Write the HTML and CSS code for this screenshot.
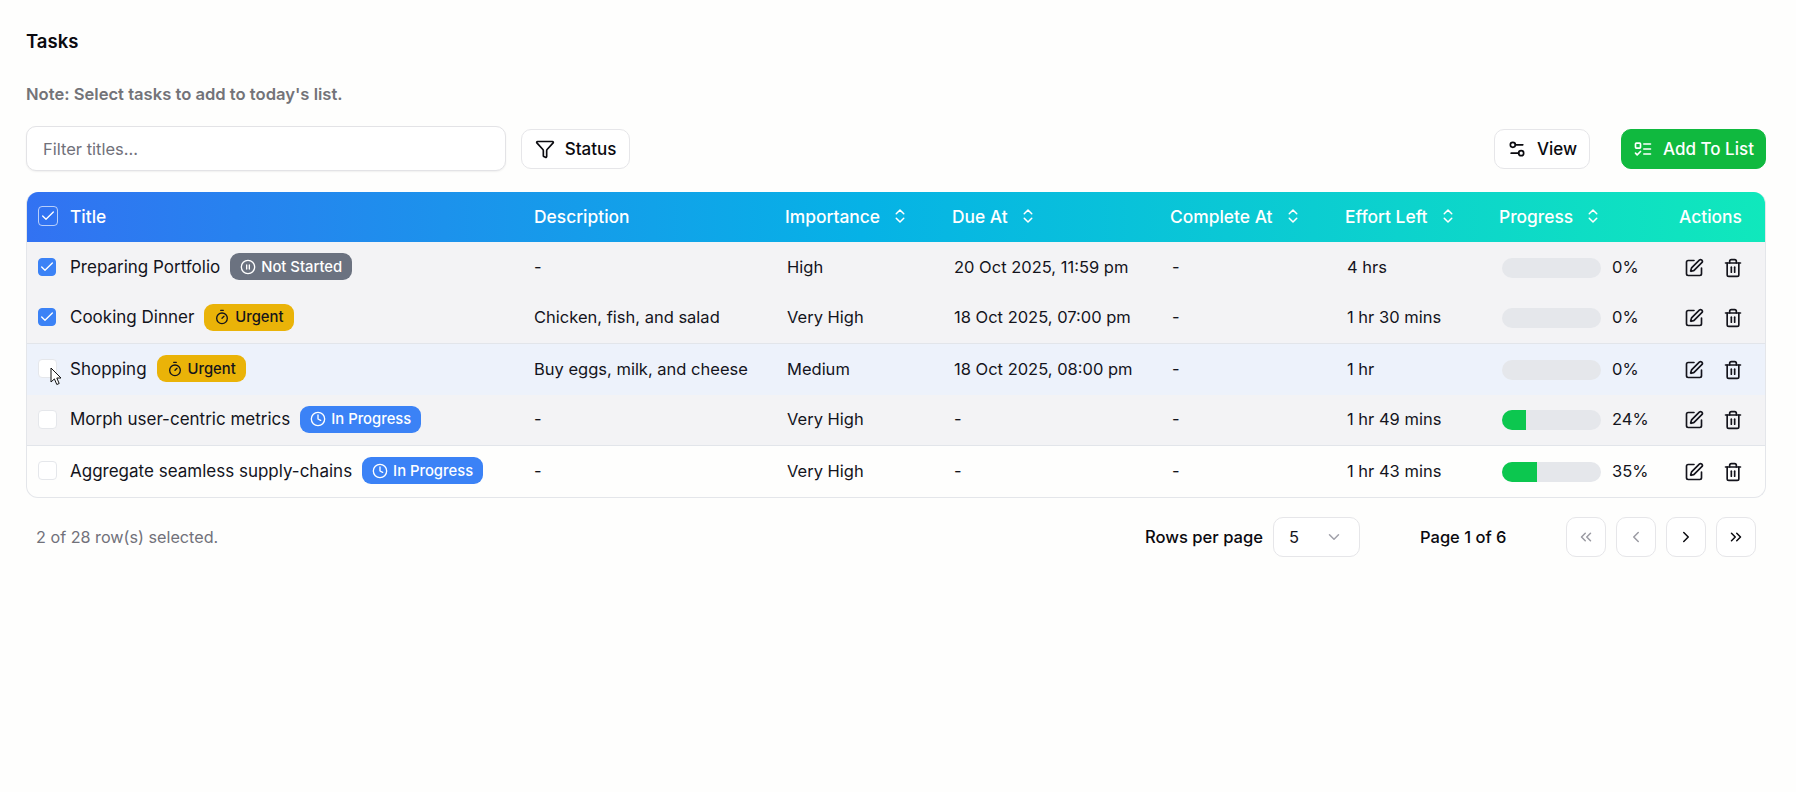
FILE: index.html
```html
<!DOCTYPE html>
<html lang="en">
<head>
<meta charset="utf-8">
<title>Tasks</title>
<link rel="stylesheet" href="styles.css">
</head>
<body>
<svg class="sprite" width="0" height="0" aria-hidden="true">
  <symbol id="i-funnel" viewBox="0 0 24 24"><path d="M10 20a1 1 0 0 0 .553.895l2 1A1 1 0 0 0 14 21v-7a2 2 0 0 1 .517-1.341L21.74 4.67A1 1 0 0 0 21 3H3a1 1 0 0 0-.742 1.67l7.225 7.989A2 2 0 0 1 10 14z"/></symbol>
  <symbol id="i-settings" viewBox="0 0 24 24"><path d="M14 17H5"/><path d="M19 7h-9"/><circle cx="17" cy="17" r="3"/><circle cx="7" cy="7" r="3"/></symbol>
  <symbol id="i-todo" viewBox="0 0 24 24"><rect x="3" y="5" width="6" height="6" rx="1"/><path d="m3 17 2 2 4-4"/><path d="M13 6h8"/><path d="M13 12h8"/><path d="M13 18h8"/></symbol>
  <symbol id="i-sort" viewBox="0 0 24 24"><path d="m7 15 5 5 5-5"/><path d="m7 9 5-5 5 5"/></symbol>
  <symbol id="i-check" viewBox="0 0 24 24"><path d="M20 6 9 17l-5-5"/></symbol>
  <symbol id="i-pause" viewBox="0 0 24 24"><circle cx="12" cy="12" r="10"/><path d="M10 15V9"/><path d="M14 15V9"/></symbol>
  <symbol id="i-timer" viewBox="0 0 24 24"><path d="M10 2h4"/><path d="m12 14 3-3"/><circle cx="12" cy="14" r="8"/></symbol>
  <symbol id="i-clock" viewBox="0 0 24 24"><circle cx="12" cy="12" r="10"/><path d="M12 6v6l4 2"/></symbol>
  <symbol id="i-edit" viewBox="0 0 24 24"><path d="M12 3H5a2 2 0 0 0-2 2v14a2 2 0 0 0 2 2h14a2 2 0 0 0 2-2v-7"/><path d="M18.375 2.625a1 1 0 0 1 3 3l-9.013 9.014a2 2 0 0 1-.853.505l-2.873.84a.5.5 0 0 1-.62-.62l.84-2.873a2 2 0 0 1 .506-.852z"/></symbol>
  <symbol id="i-trash" viewBox="0 0 24 24"><path d="M3 6h18"/><path d="M19 6v14a2 2 0 0 1-2 2H7a2 2 0 0 1-2-2V6"/><path d="M8 6V4a2 2 0 0 1 2-2h4a2 2 0 0 1 2 2v2"/><path d="M10 11v6"/><path d="M14 11v6"/></symbol>
  <symbol id="i-down" viewBox="0 0 24 24"><path d="m6 9 6 6 6-6"/></symbol>
  <symbol id="i-first" viewBox="0 0 24 24"><path d="m11 17-5-5 5-5"/><path d="m18 17-5-5 5-5"/></symbol>
  <symbol id="i-prev" viewBox="0 0 24 24"><path d="m15 18-6-6 6-6"/></symbol>
  <symbol id="i-next" viewBox="0 0 24 24"><path d="m9 18 6-6-6-6"/></symbol>
  <symbol id="i-last" viewBox="0 0 24 24"><path d="m6 17 5-5-5-5"/><path d="m13 17 5-5-5-5"/></symbol>
</svg>

<main class="page">
  <h1 class="title">Tasks</h1>
  <p class="note">Note: Select tasks to add to today's list.</p>

  <div class="toolbar">
    <input class="filter" type="text" placeholder="Filter titles...">
    <button class="btn btn-status"><svg class="ic ic-20"><use href="#i-funnel"/></svg>Status</button>
    <span class="spacer"></span>
    <button class="btn btn-view"><svg class="ic ic-20"><use href="#i-settings"/></svg>View</button>
    <button class="btn btn-add"><svg class="ic ic-20"><use href="#i-todo"/></svg>Add To List</button>
  </div>

  <div class="table-wrap">
    <table class="tasks">
      <colgroup>
        <col class="c-sel"><col class="c-title"><col class="c-desc"><col class="c-imp"><col class="c-due"><col class="c-comp"><col class="c-eff"><col class="c-prog"><col class="c-act">
      </colgroup>
      <thead>
        <tr>
          <th class="sel"><span class="cb cb-head"><svg class="ic ic-16"><use href="#i-check"/></svg></span></th>
          <th class="name">Title</th>
          <th>Description</th>
          <th class="sortable"><span class="th-in">Importance<svg class="ic ic-18"><use href="#i-sort"/></svg></span></th>
          <th class="sortable"><span class="th-in">Due At<svg class="ic ic-18"><use href="#i-sort"/></svg></span></th>
          <th class="sortable"><span class="th-in">Complete At<svg class="ic ic-18"><use href="#i-sort"/></svg></span></th>
          <th class="sortable"><span class="th-in">Effort Left<svg class="ic ic-18"><use href="#i-sort"/></svg></span></th>
          <th class="sortable"><span class="th-in">Progress<svg class="ic ic-18"><use href="#i-sort"/></svg></span></th>
          <th class="th-act">Actions</th>
        </tr>
      </thead>
      <tbody>
        <tr class="row-sel">
          <td class="sel"><span class="cb cb-on"><svg class="ic ic-16"><use href="#i-check"/></svg></span></td>
          <td class="name"><span class="title-cell">Preparing Portfolio<span class="badge b-grey"><svg class="ic ic-16"><use href="#i-pause"/></svg>Not Started</span></span></td>
          <td>-</td><td>High</td><td>20 Oct 2025, 11:59 pm</td><td>-</td><td>4 hrs</td>
          <td class="prog"><span class="prog-in"><span class="bar"></span>0%</span></td>
          <td class="act"><span class="act-in"><svg class="ic ic-20"><use href="#i-edit"/></svg><svg class="ic ic-20"><use href="#i-trash"/></svg></span></td>
        </tr>
        <tr class="row-sel row-sep">
          <td class="sel"><span class="cb cb-on"><svg class="ic ic-16"><use href="#i-check"/></svg></span></td>
          <td class="name"><span class="title-cell">Cooking Dinner<span class="badge b-amber"><svg class="ic ic-16"><use href="#i-timer"/></svg>Urgent</span></span></td>
          <td>Chicken, fish, and salad</td><td>Very High</td><td>18 Oct 2025, 07:00 pm</td><td>-</td><td>1 hr 30 mins</td>
          <td class="prog"><span class="prog-in"><span class="bar"></span>0%</span></td>
          <td class="act"><span class="act-in"><svg class="ic ic-20"><use href="#i-edit"/></svg><svg class="ic ic-20"><use href="#i-trash"/></svg></span></td>
        </tr>
        <tr class="row-hover">
          <td class="sel"><span class="cb"></span></td>
          <td class="name"><span class="title-cell">Shopping<span class="badge b-amber"><svg class="ic ic-16"><use href="#i-timer"/></svg>Urgent</span></span></td>
          <td>Buy eggs, milk, and cheese</td><td>Medium</td><td>18 Oct 2025, 08:00 pm</td><td>-</td><td>1 hr</td>
          <td class="prog"><span class="prog-in"><span class="bar"></span>0%</span></td>
          <td class="act"><span class="act-in"><svg class="ic ic-20"><use href="#i-edit"/></svg><svg class="ic ic-20"><use href="#i-trash"/></svg></span></td>
        </tr>
        <tr class="row-sel row-sep">
          <td class="sel"><span class="cb"></span></td>
          <td class="name"><span class="title-cell">Morph user-centric metrics<span class="badge b-blue"><svg class="ic ic-16"><use href="#i-clock"/></svg>In Progress</span></span></td>
          <td>-</td><td>Very High</td><td>-</td><td>-</td><td>1 hr 49 mins</td>
          <td class="prog"><span class="prog-in"><span class="bar"><span class="fill" style="width:24%"></span></span>24%</span></td>
          <td class="act"><span class="act-in"><svg class="ic ic-20"><use href="#i-edit"/></svg><svg class="ic ic-20"><use href="#i-trash"/></svg></span></td>
        </tr>
        <tr>
          <td class="sel"><span class="cb"></span></td>
          <td class="name"><span class="title-cell">Aggregate seamless supply-chains<span class="badge b-blue"><svg class="ic ic-16"><use href="#i-clock"/></svg>In Progress</span></span></td>
          <td>-</td><td>Very High</td><td>-</td><td>-</td><td>1 hr 43 mins</td>
          <td class="prog"><span class="prog-in"><span class="bar"><span class="fill" style="width:35%"></span></span>35%</span></td>
          <td class="act"><span class="act-in"><svg class="ic ic-20"><use href="#i-edit"/></svg><svg class="ic ic-20"><use href="#i-trash"/></svg></span></td>
        </tr>
      </tbody>
    </table>
  </div>

  <div class="footer">
    <span class="count">2 of 28 row(s) selected.</span>
    <span class="spacer"></span>
    <span class="rows-label">Rows per page</span>
    <span class="select">5<svg class="ic ic-18"><use href="#i-down"/></svg></span>
    <span class="page-label">Page 1 of 6</span>
    <span class="pager">
      <button class="pg pg-off"><svg class="ic ic-18"><use href="#i-first"/></svg></button>
      <button class="pg pg-off"><svg class="ic ic-18"><use href="#i-prev"/></svg></button>
      <button class="pg"><svg class="ic ic-18"><use href="#i-next"/></svg></button>
      <button class="pg"><svg class="ic ic-18"><use href="#i-last"/></svg></button>
    </span>
  </div>

  <svg class="cursor" width="13" height="19" viewBox="0 0 13 19" aria-hidden="true"><path d="M1 1v14l3.4-3.1 2.4 5.6 2.4-1-2.4-5.5H11z"/></svg>
</main>
</body>
</html>
```

FILE: styles.css
```css
* { box-sizing: border-box; }

html, body {
  margin: 0;
  background: #fefefd;
}

body {
  font-family: Inter, "Liberation Sans", sans-serif;
  font-size: 16.5px;
  color: #14141c;
}

.sprite { position: absolute; }

.ic {
  width: 14px;
  height: 14px;
  flex: none;
  fill: none;
  stroke: currentColor;
  stroke-width: 2;
  stroke-linecap: round;
  stroke-linejoin: round;
}
.ic-16 { width: 16px; height: 16px; }
.ic-18 { width: 18px; height: 18px; }
.ic-20 { width: 20px; height: 20px; }

.page {
  position: relative;
  padding: 29px 30px 0 26px;
  height: 792px;
}

.title {
  margin: 0;
  font-size: 18.5px;
  line-height: 24px;
  font-weight: 600;
  color: #0a0a0f;
}

.note {
  margin: 29px 0 0;
  font-size: 16.6px;
  line-height: 24px;
  font-weight: 600;
  color: #737378;
}

.toolbar {
  display: flex;
  align-items: center;
  margin-top: 20px;
  height: 45px;
}

.spacer { flex: 1; }

.filter {
  width: 480px;
  height: 45px;
  padding: 0 16px;
  border: 1px solid #e3e3e6;
  border-radius: 10px;
  background: #fff;
  font: inherit;
  box-shadow: 0 1px 2px rgba(0, 0, 0, .06);
  outline: none;
}
.filter::placeholder { color: #71717a; opacity: 1; }

.btn {
  display: inline-flex;
  align-items: center;
  justify-content: center;
  gap: 10px;
  height: 40px;
  border: 1px solid #e6e6e9;
  border-radius: 10px;
  background: #fff;
  font: inherit;
  font-size: 17px;
  font-weight: 500;
  color: #0a0a0f;
  padding: 0;
}
.btn-status { width: 109px; margin-left: 15px; }
.btn-view { width: 96px; }
.btn-add {
  width: 145px;
  margin-left: 31px;
  background: #10b93f;
  border-color: #10b93f;
  color: #fff;
}

.table-wrap {
  margin-top: 21px;
  width: 1740px;
  border: 1px solid #e4e6ea;
  border-top: 0;
  border-radius: 12px;
  overflow: hidden;
}

.tasks {
  width: 100%;
  table-layout: fixed;
  border-collapse: separate;
  border-spacing: 0;
}

.c-sel { width: 34px; }
.c-title { width: 465px; }
.c-desc { width: 253px; }
.c-imp { width: 167px; }
.c-due { width: 218px; }
.c-comp { width: 175px; }
.c-eff { width: 154px; }
.c-prog { width: 167px; }
.c-act { width: 105px; }

.tasks thead tr {
  background: linear-gradient(90deg, #3272f2 0%, #06b2e6 48%, #10e8bc 100%);
}

.tasks th {
  height: 50px;
  padding: 0 0 2px 8px;
  text-align: left;
  font-size: 17.4px;
  font-weight: 500;
  color: #fff;
  white-space: nowrap;
}
.tasks th.sortable { padding-left: 6px; }
.tasks th.sel, .tasks td.sel { padding: 0 0 2px 11px; }
.tasks th.th-act { padding-left: 19px; }
.tasks th.name, .tasks td.name { padding-left: 9px; }

.th-in {
  display: inline-flex;
  align-items: center;
  gap: 11px;
}

.tasks td {
  height: 51px;
  padding: 0 0 2px 8px;
  white-space: nowrap;
  color: #14141c;
}

.row-sel td { background: #f3f3f5; }
.row-hover td { background: #edf2fb; }
.row-sep td { border-bottom: 1px solid #e2e5ea; }

.cb {
  display: flex;
  align-items: center;
  justify-content: center;
  width: 19px;
  height: 19px;
  border: 1px solid #e5e7eb;
  border-radius: 4px;
  background: #fff;
  color: #fff;
}
.cb-on { background: #3b82f6; border-color: #3b82f6; width: 18px; height: 18px; }
.cb-head { background: transparent; border-color: rgba(255, 255, 255, .65); width: 20px; height: 20px; }

.title-cell {
  display: flex;
  align-items: center;
  gap: 10px;
  font-size: 17px;
}

.badge {
  display: inline-flex;
  align-items: center;
  gap: 5px;
  height: 27px;
  padding: 0 10px;
  border-radius: 9px;
  font-size: 14.8px;
  font-weight: 500;
}
.b-grey { background: #6b7280; color: #fff; }
.b-amber { background: #eab308; color: #14141c; }
.b-blue { background: #3b82f6; color: #fff; }

.tasks td.prog { padding-left: 9px; }
.prog-in {
  display: flex;
  align-items: center;
  gap: 11px;
}
.bar {
  display: block;
  width: 99px;
  height: 20px;
  margin-top: 2px;
  border-radius: 10px;
  background: #e5e7eb;
  overflow: hidden;
}
.fill {
  display: block;
  height: 100%;
  background: #0cc74f;
}

.tasks td.act { padding: 0 0 0 24px; }
.act-in {
  display: flex;
  align-items: center;
  gap: 19px;
}

.footer {
  display: flex;
  align-items: center;
  height: 40px;
  margin-top: 20px;
  padding: 0 10px 2px;
}

.count { color: #71717a; font-size: 16.2px; }
.rows-label { font-weight: 500; color: #0a0a0f; font-size: 16.6px; }

.select {
  display: flex;
  align-items: center;
  justify-content: space-between;
  width: 87px;
  height: 40px;
  margin-left: 10px;
  padding: 0 16px 0 15px;
  border: 1px solid #e6e6e9;
  border-radius: 10px;
  background: #fff;
}
.select .ic { color: #a1a1aa; }

.page-label {
  margin-left: 60px;
  width: 85px;
  text-align: center;
  font-weight: 500;
  white-space: nowrap;
  color: #0a0a0f;
}

.pager {
  display: flex;
  gap: 10px;
  margin-left: 61px;
}

.pg {
  display: flex;
  align-items: center;
  justify-content: center;
  width: 40px;
  height: 40px;
  padding: 0;
  border: 1px solid #e6e6e9;
  border-radius: 10px;
  background: #fff;
  color: #0a0a0f;
}
.pg-off { color: #9b9ba3; }

.cursor {
  position: absolute;
  left: 50px;
  top: 367px;
  fill: #fff;
  stroke: #111;
  stroke-width: 1;
}
```
